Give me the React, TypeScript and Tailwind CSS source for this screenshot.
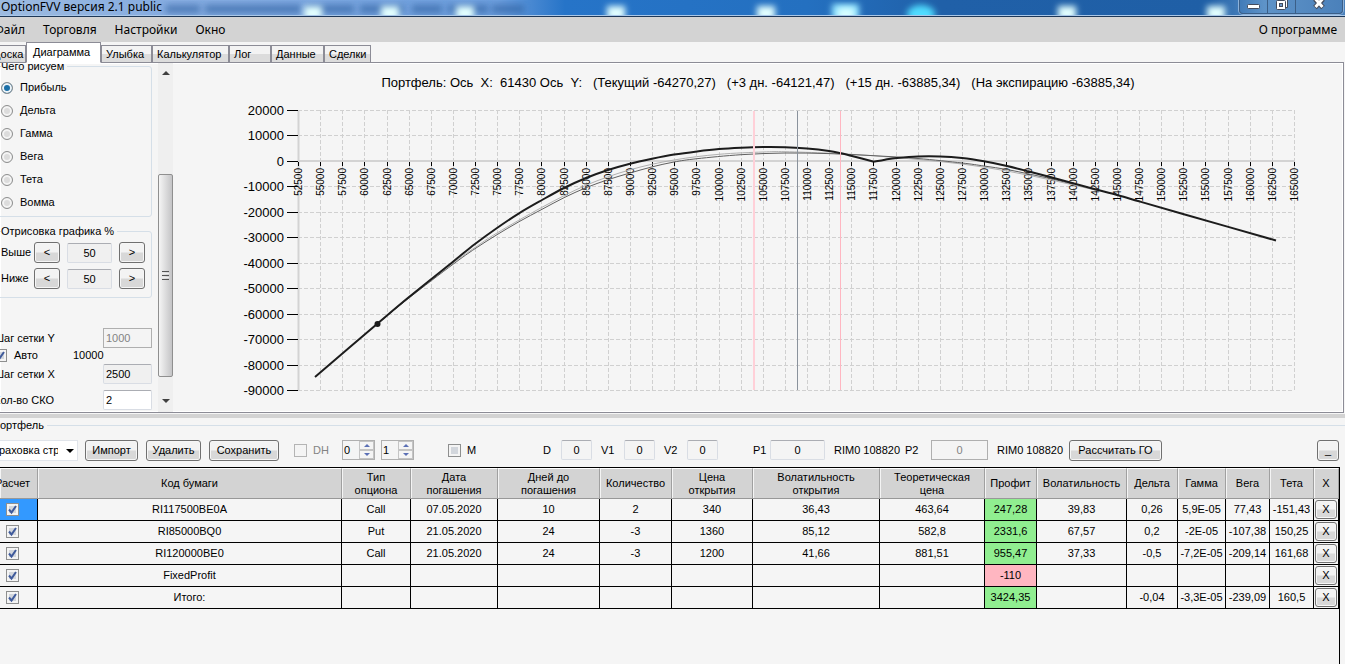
import { useState } from "react";
import clsx from "clsx";

const BUTTON =
  "flex shrink-0 items-center justify-center rounded-[3px] border border-[#707070] bg-linear-to-b from-[#f3f3f3] from-45% to-[#d8d8d8] to-55% shadow-[inset_0_0_0_1px_#f6f6f6]";
const FIELD =
  "shrink-0 rounded-[2px] border border-[#d9dde4] border-t-[#abadb3] outline-none";

const TABS = [
  { title: "Доска", width: "w-[34px]" },
  { title: "Диаграмма", width: "w-[75px]" },
  { title: "Улыбка", width: "w-[51px]" },
  { title: "Калькулятор", width: "w-[77px]" },
  { title: "Лог", width: "w-[42px]" },
  { title: "Данные", width: "w-[53px]" },
  { title: "Сделки", width: "w-[47px]" },
];

const GREEKS = ["Прибыль", "Дельта", "Гамма", "Вега", "Тета", "Вомма"];

const COLUMNS = [
  { title: "Расчет", width: "w-[38px]" },
  { title: "Код бумаги", width: "" },
  { title: "Тип опциона", width: "w-[69px]" },
  { title: "Дата погашения", width: "w-[87px]" },
  { title: "Дней до погашения", width: "w-[102px]" },
  { title: "Количество", width: "w-[72px]" },
  { title: "Цена открытия", width: "w-[81px]" },
  { title: "Волатильность открытия", width: "w-[127px]" },
  { title: "Теоретическая цена", width: "w-[105px]" },
  { title: "Профит", width: "w-[52px]" },
  { title: "Волатильность", width: "w-[90px]" },
  { title: "Дельта", width: "w-[51px]" },
  { title: "Гамма", width: "w-[48px]" },
  { title: "Вега", width: "w-[44px]" },
  { title: "Тета", width: "w-[44px]" },
  { title: "X", width: "w-[25px]" },
];

const PROFIT = 8;

const ROWS = [
  ["RI117500BE0A", "Call", "07.05.2020", "10", "2", "340", "36,43", "463,64", "247,28", "39,83", "0,26", "5,9E-05", "77,43", "-151,43"],
  ["RI85000BQ0", "Put", "21.05.2020", "24", "-3", "1360", "85,12", "582,8", "2331,6", "67,57", "0,2", "-2E-05", "-107,38", "150,25"],
  ["RI120000BE0", "Call", "21.05.2020", "24", "-3", "1200", "41,66", "881,51", "955,47", "37,33", "-0,5", "-7,2E-05", "-209,14", "161,68"],
  ["FixedProfit", "", "", "", "", "", "", "", "-110", "", "", "", "", ""],
  ["Итого:", "", "", "", "", "", "", "", "3424,35", "", "-0,04", "-3,3E-05", "-239,09", "160,5"],
];

type Point = [number, number];

const EXPIRY_LEFT: Point[] = [
  [315, 377], [377, 324], [409, 297], [453, 261.7], [475, 244], [497, 228], [519, 213.3],
  [542, 200], [564, 188], [586, 178], [608, 170], [630, 163.7], [652, 158.8], [674, 154.6],
  [697, 151.4], [719, 149], [741, 147.7], [763, 147], [785, 147.2], [807, 148.6], [829, 151],
  [840, 153], [851, 155.7], [874, 161.7],
];
const EXPIRY_RIGHT: Point[] = [
  [874, 161.7], [885, 159.7], [897, 158], [918, 156.4], [940, 156.4], [962, 158], [984, 161.3],
  [1007, 166], [1029, 171.5], [1051, 177.3], [1073, 183.3], [1095, 189.3], [1117, 195],
  [1139, 201.3], [1183, 214], [1276, 240.5],
];
const CURRENT: Point[] = [
  [377, 324], [409, 298], [453, 264.3], [475, 248.7], [497, 234.7], [519, 221.7], [542, 209.3],
  [564, 197.7], [586, 187.7], [608, 179.7], [630, 173], [652, 166.9], [674, 162], [697, 158.7],
  [741, 154.7], [785, 153], [829, 153.6], [874, 155.7], [918, 158.5], [962, 163], [984, 166],
  [1007, 169.5], [1029, 174], [1051, 178.7], [1073, 184],
];
const PLUS_THREE: Point[] = [
  [377, 324], [409, 297.6], [453, 263], [475, 247.5], [497, 233], [542, 207.3], [586, 185.3],
  [630, 169.8], [674, 160], [719, 154.3], [763, 152], [785, 151.7], [829, 153.2], [874, 155.8],
  [918, 159.5], [962, 164], [1007, 171], [1051, 180], [1095, 190],
];

// Catmull-Rom spline as cubic bezier segments
function smooth(points: Point[]) {
  let d = `M${points[0][0]} ${points[0][1]}`;
  for (let i = 0; i < points.length - 1; i++) {
    const p0 = points[Math.max(i - 1, 0)];
    const p1 = points[i];
    const p2 = points[i + 1];
    const p3 = points[Math.min(i + 2, points.length - 1)];
    d += `C${p1[0] + (p2[0] - p0[0]) / 6} ${p1[1] + (p2[1] - p0[1]) / 6} ${p2[0] - (p3[0] - p1[0]) / 6} ${p2[1] - (p3[1] - p1[1]) / 6} ${p2[0]} ${p2[1]}`;
  }
  return d;
}

function TitleBar() {
  const glows = [313, 390, 465, 616, 766, 1067, 1216];
  const smudges = [[166, 34], [205, 96], [306, 48], [360, 44], [412, 30], [448, 40], [492, 32]];

  return (
    <header className="relative h-[17px] shrink-0 overflow-hidden border-b border-[#1e3858] bg-[#2468b4]">
      <svg
        className="absolute inset-0 h-full w-full"
        viewBox="0 0 1345 16"
        preserveAspectRatio="none"
        aria-hidden="true"
      >
        <defs>
          <linearGradient id="aero">
            <stop offset="0" stopColor="#9dbbe0" />
            <stop offset="0.12" stopColor="#86ace0" />
            <stop offset="0.37" stopColor="#6a9cdb" />
            <stop offset="0.42" stopColor="#2674c8" />
            <stop offset="0.6" stopColor="#2470c0" />
            <stop offset="0.7" stopColor="#2060a8" />
            <stop offset="0.9" stopColor="#1f5fa6" />
            <stop offset="0.94" stopColor="#5e93c8" />
            <stop offset="1" stopColor="#4a80ba" />
          </linearGradient>
          <filter id="soft" x="-50%" y="-50%" width="200%" height="200%">
            <feGaussianBlur stdDeviation="3" />
          </filter>
        </defs>
        <rect width="1345" height="16" fill="url(#aero)" />
        {smudges.map(([x, width]) => (
          <rect key={x} x={x} y="5" width={width} height="8" fill="#2d5f9f" opacity="0.6" filter="url(#soft)" />
        ))}
        {glows.map((x) => (
          <rect key={x} x={x - 9} y="6" width="18" height="14" fill="#e2ffff" filter="url(#soft)" />
        ))}
        <rect x="832" y="4" width="27" height="16" fill="#8fe2ff" filter="url(#soft)" />
        <rect x="838" y="8" width="16" height="12" fill="#d8ffff" filter="url(#soft)" />
        <ellipse cx="921" cy="14" rx="14" ry="9" fill="#50dcff" filter="url(#soft)" />
        <path d="M0 15.500H1345" stroke="#a9c7e8" />
      </svg>
      <h1 className="relative pl-px font-['Noto_Sans'] text-[12px] leading-[14px]">
        OptionFVV версия 2.1 public
      </h1>
      <div className="absolute top-0 right-[2px] flex h-[14px] rounded-b-[4px] border border-t-0 border-[#3b5f88] shadow-[0_0_0_1px_#8db2da]">
        <button aria-label="Свернуть" className="flex w-[28px] items-center justify-center border-r border-[#3b5f88]">
          <svg width="13" height="5" viewBox="0 0 13 5">
            <rect x="0.5" y="0.5" width="12" height="4" rx="1" fill="#fff" stroke="#434b5c" />
          </svg>
        </button>
        <button aria-label="Восстановить" className="flex w-[28px] items-start justify-center border-r border-[#3b5f88]">
          <svg width="12" height="11" viewBox="0 0 12 11">
            <path d="M3.500 -3H11.500V7.500H3.500Z" fill="#fff" stroke="#434b5c" />
            <rect x="0.5" y="0.5" width="9" height="9" rx="1" fill="#fff" stroke="#434b5c" />
            <rect x="3.500" y="3.500" width="3" height="3" fill="#6f9acb" stroke="#434b5c" />
          </svg>
        </button>
        <button aria-label="Закрыть" className="flex w-[46px] items-start justify-center">
          <svg width="14" height="10" viewBox="0 0 14 10">
            <path d="M3 -1L11 7.500M11 -1L3 7.500" stroke="#434b5c" strokeWidth="5" />
            <path d="M3.500 -1L10.500 7M10.500 -1L3.500 7" stroke="#fff" strokeWidth="3" />
          </svg>
        </button>
      </div>
    </header>
  );
}

function Menu() {
  return (
    <nav className="flex h-[25px] shrink-0 items-center gap-[18px] bg-[#d3d3d3] pr-2 font-['Noto_Sans'] text-[12px]">
      <button className="-ml-1.5">Файл</button>
      <button>Торговля</button>
      <button>Настройки</button>
      <button>Окно</button>
      <button className="ml-auto">О программе</button>
    </nav>
  );
}

function Tabs() {
  const [active, setActive] = useState("Диаграмма");

  return (
    <div role="tablist" className="-mb-px -ml-2 flex h-[21px] shrink-0 items-end">
      {TABS.map(({ title, width }, i) => (
        <button
          key={title}
          role="tab"
          aria-selected={title === active}
          onClick={() => setActive(title)}
          className={clsx(
            "shrink-0 border border-[#8c8c96] text-left whitespace-nowrap",
            width,
            title === active
              ? "z-10 h-[21px] border-b-white bg-white pl-1.5"
              : "h-[18px] bg-linear-to-b from-[#f3f3f3] from-50% to-[#dcdcdc] to-50%",
            title !== active && i > 0 && "pl-1",
          )}
        >
          {title}
        </button>
      ))}
    </div>
  );
}

function Check({ label, checked, disabled }: { label: string; checked?: boolean; disabled?: boolean }) {
  return (
    <span className="relative block size-[13px] shrink-0">
      <input
        type="checkbox"
        aria-label={label}
        defaultChecked={checked}
        disabled={disabled}
        className={clsx(
          "peer block size-[13px] appearance-none border shadow-[inset_0_0_0_2px_#f4f4f4]",
          disabled ? "border-[#b4b4b4] bg-[#f4f4f4]" : "border-[#8e8f8f] bg-[#d2d6dc]",
        )}
      />
      <svg
        viewBox="0 0 13 13"
        className="pointer-events-none absolute inset-0 hidden size-[13px] peer-checked:block"
      >
        <path d="M3 6.500L5.500 9.500L10 3" fill="none" stroke="#3f5a9b" strokeWidth="2" />
      </svg>
    </span>
  );
}

function Stepper({ id, label }: { id: string; label: string }) {
  return (
    <div className="flex h-[21px] items-center">
      <label htmlFor={id} className="w-[33px]">
        {label}
      </label>
      <button className={clsx(BUTTON, "h-[21px] w-[26px]")}>&lt;</button>
      <input
        id={id}
        readOnly
        defaultValue="50"
        className={clsx(FIELD, "ml-[7px] h-5 w-[45px] bg-[#f0f0f0] text-center")}
      />
      <button className={clsx(BUTTON, "ml-[7px] h-[21px] w-[26px]")}>&gt;</button>
    </div>
  );
}

function Settings() {
  return (
    <aside className="flex w-[173px] shrink-0 overflow-hidden">
      <div className="w-[152px] shrink-0">
        <fieldset className="-mt-[3px] -ml-2 rounded-[3px] border border-[#d5dfe8] pt-[3px] pb-[2px] pl-2">
          <legend className="pr-[3px] leading-[13px]">Чего рисуем</legend>
          {GREEKS.map((greek) => (
            <label key={greek} className="flex h-[23px] items-center gap-[7px]">
              <input
                type="radio"
                name="greek"
                defaultChecked={greek === "Прибыль"}
                className="size-3 appearance-none rounded-full border border-[#8e8f8f] bg-[#dcdcdc] shadow-[inset_0_0_0_2px_#f4f4f4] checked:bg-[#1a6fa8] checked:shadow-[inset_0_0_0_2px_#eef4f8]"
              />
              {greek}
            </label>
          ))}
        </fieldset>

        <fieldset className="mt-2 -ml-2 flex flex-col gap-[5px] rounded-[3px] border border-[#d5dfe8] pt-[4px] pb-2 pl-2">
          <legend className="pr-[3px] leading-[13px]">Отрисовка графика %</legend>
          <Stepper id="above" label="Выше" />
          <Stepper id="below" label="Ниже" />
        </fieldset>

        <div className="mt-[30px] -ml-1.5 flex h-5 items-center justify-between">
          <label htmlFor="stepY">Шаг сетки Y</label>
          <input
            id="stepY"
            disabled
            defaultValue="1000"
            className="h-5 w-[49px] border border-[#afafaf] bg-[#f4f4f4] pl-[2px] text-[#838383]"
          />
        </div>
        <div className="mb-[2px] -ml-1.5 flex h-3.5 items-center">
          <Check label="Авто" checked />
          <span className="ml-[7px] w-[59px]">Авто</span>
          <output>10000</output>
        </div>
        <div className="-ml-1.5 flex h-5 items-center justify-between">
          <label htmlFor="stepX">Шаг сетки X</label>
          <input
            id="stepX"
            readOnly
            defaultValue="2500"
            className={clsx(FIELD, "h-5 w-[49px] bg-[#f0f0f0] pl-[2px]")}
          />
        </div>
        <div className="mt-1.5 -ml-1.5 flex h-5 items-center justify-between">
          <label htmlFor="deviations">Кол-во СКО</label>
          <input id="deviations" defaultValue="2" className={clsx(FIELD, "h-5 w-[49px] bg-white pl-[2px]")} />
        </div>
      </div>

      <div className="ml-1.5 flex w-[15px] shrink-0 flex-col bg-[#efefef]">
        <button aria-label="Вверх" className="flex h-5 items-center justify-center">
          <span className="border-x-4 border-b-4 border-transparent border-b-[#404040]" />
        </button>
        <div className="flex grow flex-col justify-end">
          <div className="flex h-[203px] flex-col items-center justify-center gap-px rounded-[2px] border border-[#8f8f8f] bg-linear-to-r from-[#f5f5f5] to-[#c4c4c6]">
            <span className="h-px w-[7px] bg-[#555]" />
            <span className="h-px w-[7px] bg-[#eee]" />
            <span className="h-px w-[7px] bg-[#555]" />
            <span className="h-px w-[7px] bg-[#eee]" />
            <span className="h-px w-[7px] bg-[#555]" />
          </div>
        </div>
        <button aria-label="Вниз" className="flex h-[35px] items-center justify-center">
          <span className="mt-3 border-x-4 border-t-4 border-transparent border-t-[#404040]" />
        </button>
      </div>
    </aside>
  );
}

function Chart() {
  const xTicks = Array.from({ length: 46 }, (_, i) => ({
    value: 52500 + i * 2500,
    x: Math.round(298 + (i * 996) / 45) + 0.5,
  }));
  const yTicks = Array.from({ length: 12 }, (_, i) => ({
    value: 20000 - i * 10000,
    y: Math.round(110 + (i * 280) / 11) + 0.5,
  }));

  return (
    <div className="relative min-w-0 grow">
      <h2 className="absolute inset-x-0 top-3 flex justify-center gap-[11px] text-[13px] leading-4 whitespace-pre">
        <span>Портфель: Ось  X:  61430 Ось  Y:</span>
        <span>(Текущий -64270,27)</span>
        <span>(+3 дн. -64121,47)</span>
        <span>(+15 дн. -63885,34)</span>
        <span>(На экспирацию -63885,34)</span>
      </h2>
      <svg viewBox="173 63 1170 349" className="block w-full">
        <g stroke="#d0d0d0" strokeDasharray="4 2">
          {xTicks.map(({ x }) => (
            <path key={x} d={`M${x} 110V390`} />
          ))}
          {yTicks.map(({ y }) => (
            <path key={y} d={`M298 ${y}H1294`} />
          ))}
        </g>
        <path d="M298.500 110V390M298 161H1295" stroke="#d3d3d3" strokeWidth="2" fill="none" />

        <g fontSize="13" textAnchor="end">
          {yTicks.map(({ value, y }) => (
            <g key={value}>
              <path d={`M287 ${y}H298`} stroke="#000" />
              <text x="284" y={y + 4.500}>
                {value}
              </text>
            </g>
          ))}
        </g>
        <g fontSize="10" textAnchor="end">
          {xTicks.map(({ value, x }) => (
            <g key={value}>
              <path d={`M${x} 162V166`} stroke="#000" />
              <text transform={`translate(${x + 3.500} 168) rotate(-90)`}>{value}</text>
            </g>
          ))}
        </g>

        <g fill="none" strokeLinejoin="round">
          <path d={smooth(PLUS_THREE)} stroke="#b0b0b0" />
          <path d={smooth(CURRENT)} stroke="#606060" />
          <path d={smooth(EXPIRY_LEFT)} stroke="#1c1c1c" strokeWidth="2" />
          <path d={smooth(EXPIRY_RIGHT)} stroke="#1c1c1c" strokeWidth="2" />
          <path d="M754 111V390" stroke="#ffd0d8" strokeWidth="2" />
          <path d="M797.500 111V390" stroke="#8a929c" />
          <path d="M840.500 111V390" stroke="#ffb6c1" />
        </g>
        <circle cx="377.500" cy="324" r="3" fill="#1c1c1c" />
      </svg>
    </div>
  );
}

function Spinner({ label, value }: { label: string; value: string }) {
  return (
    <div className="flex h-5 w-[33px] shrink-0 border border-[#afafaf] bg-[#f4f4f4]">
      <input aria-label={label} readOnly defaultValue={value} className="w-4 pl-px outline-none" />
      <div className="flex w-[15px] flex-col">
        <button aria-label={`${label} больше`} className="flex grow items-center justify-center border border-[#c4c4c4]">
          <span className="border-x-3 border-b-3 border-transparent border-b-[#5a6fb5]" />
        </button>
        <button aria-label={`${label} меньше`} className="flex grow items-center justify-center border border-[#c4c4c4]">
          <span className="border-x-3 border-t-3 border-transparent border-t-[#5a6fb5]" />
        </button>
      </div>
    </div>
  );
}

function Toolbar() {
  return (
    <div className="flex h-[34px] items-center">
      <div className="relative -ml-2 shrink-0">
        <select
          aria-label="Стратегия"
          className="block h-[21px] w-[86px] appearance-none border border-[#e0e4ea] bg-white pr-[19px] pl-[6px] outline-none"
        >
          <option>раховка стратегии</option>
        </select>
        <span className="pointer-events-none absolute top-[9px] right-1 border-x-4 border-t-4 border-transparent border-t-black" />
      </div>
      <button className={clsx(BUTTON, "ml-[7px] h-[21px] w-[53px]")}>Импорт</button>
      <button className={clsx(BUTTON, "ml-2 h-[21px] w-[55px]")}>Удалить</button>
      <button className={clsx(BUTTON, "ml-2 h-[21px] w-[70px]")}>Сохранить</button>
      <div className="ml-[15px] flex w-12 shrink-0 items-center gap-1.5 text-[#838383]">
        <Check label="DH" disabled />
        DH
      </div>
      <div className="flex gap-1.5">
        <Spinner label="От" value="0" />
        <Spinner label="До" value="1" />
      </div>
      <div className="ml-[34px] flex w-[95px] shrink-0 items-center gap-1.5">
        <Check label="M" />M
      </div>
      <label htmlFor="d" className="w-[18px] shrink-0">D</label>
      <input id="d" defaultValue="0" className={clsx(FIELD, "h-5 w-[31px] bg-[#f4f4f4] text-center")} />
      <label htmlFor="v1" className="ml-[9px] w-[23px] shrink-0">V1</label>
      <input id="v1" defaultValue="0" className={clsx(FIELD, "h-5 w-[31px] bg-[#f4f4f4] text-center")} />
      <label htmlFor="v2" className="ml-[9px] w-[23px] shrink-0">V2</label>
      <input id="v2" defaultValue="0" className={clsx(FIELD, "h-5 w-[31px] bg-[#f4f4f4] text-center")} />
      <label htmlFor="p1" className="ml-[35px] w-[17px] shrink-0">P1</label>
      <input id="p1" defaultValue="0" className={clsx(FIELD, "h-5 w-[55px] bg-[#f4f4f4] text-center")} />
      <span className="ml-[9px] w-[71px] shrink-0">RIM0 108820</span>
      <label htmlFor="p2" className="w-[26px] shrink-0">P2</label>
      <input
        id="p2"
        disabled
        defaultValue="0"
        className="h-5 w-[57px] shrink-0 border border-[#afafaf] bg-[#f4f4f4] text-center text-[#838383]"
      />
      <span className="ml-[9px] w-[72px] shrink-0">RIM0 108820</span>
      <button className={clsx(BUTTON, "h-[21px] w-[93px]")}>Рассчитать ГО</button>
      <button className={clsx(BUTTON, "mr-1.5 ml-auto h-[21px] w-[22px]")}>_</button>
    </div>
  );
}

function Positions() {
  return (
    <table className="w-full table-fixed border-separate border-spacing-0 text-center">
      <colgroup>
        {COLUMNS.map(({ title, width }) => (
          <col key={title} className={width} />
        ))}
      </colgroup>
      <thead>
        <tr className="h-[31px] bg-[#d3d3d3]">
          {COLUMNS.map(({ title }, i) => (
            <th
              key={title}
              className="border-t border-r border-b border-t-white border-r-[#a0a0a0] border-b-[#989898] p-0 leading-[13px] font-normal shadow-[inset_1px_0_#f4f4f4]"
            >
              <span className={clsx("block", i === 0 ? "-ml-3 whitespace-nowrap" : "px-1")}>{title}</span>
            </th>
          ))}
        </tr>
      </thead>
      <tbody>
        {ROWS.map((row, r) => (
          <tr key={row[0]} className="h-[22px]">
            <td className={clsx("border-r border-b border-black p-0", r === 0 && "bg-[#3399ff]")}>
              <div className="pl-1.5">
                <Check label={row[0]} checked />
              </div>
            </td>
            {row.map((cell, i) => (
              <td
                key={i}
                className={clsx(
                  "border-r border-b border-black p-0 whitespace-nowrap",
                  i === PROFIT && (cell.startsWith("-") ? "bg-[#ffb6c1]" : "bg-[#90ee90]"),
                )}
              >
                {cell}
              </td>
            ))}
            <td className="border-r border-b border-black p-px">
              <button className={clsx(BUTTON, "h-[19px] w-[22px]")}>X</button>
            </td>
          </tr>
        ))}
      </tbody>
    </table>
  );
}

export default function App() {
  return (
    <div className="flex min-h-screen flex-col overflow-hidden bg-[#f5f5f5] font-['Liberation_Sans',sans-serif] text-[11px] leading-[13px] text-black">
      <TitleBar />
      <Menu />
      <Tabs />
      <main className="mr-px flex border border-l-0 border-[#8c8c96] shadow-[inset_0_0_0_1px_#fff]">
        <Settings />
        <Chart />
      </main>
      <div className="mt-px h-1 shrink-0 bg-[#d3d3d3]" />

      <section className="flex grow flex-col">
        <div className="flex h-[15px] items-center gap-[3px] overflow-hidden">
          <h2 className="-ml-2 shrink-0">Портфель</h2>
          <span className="h-px grow bg-[#d5dfe8]" />
        </div>
        <Toolbar />
        <div className="mr-[5px] grow border-t border-r border-black">
          <Positions />
        </div>
      </section>
    </div>
  );
}
